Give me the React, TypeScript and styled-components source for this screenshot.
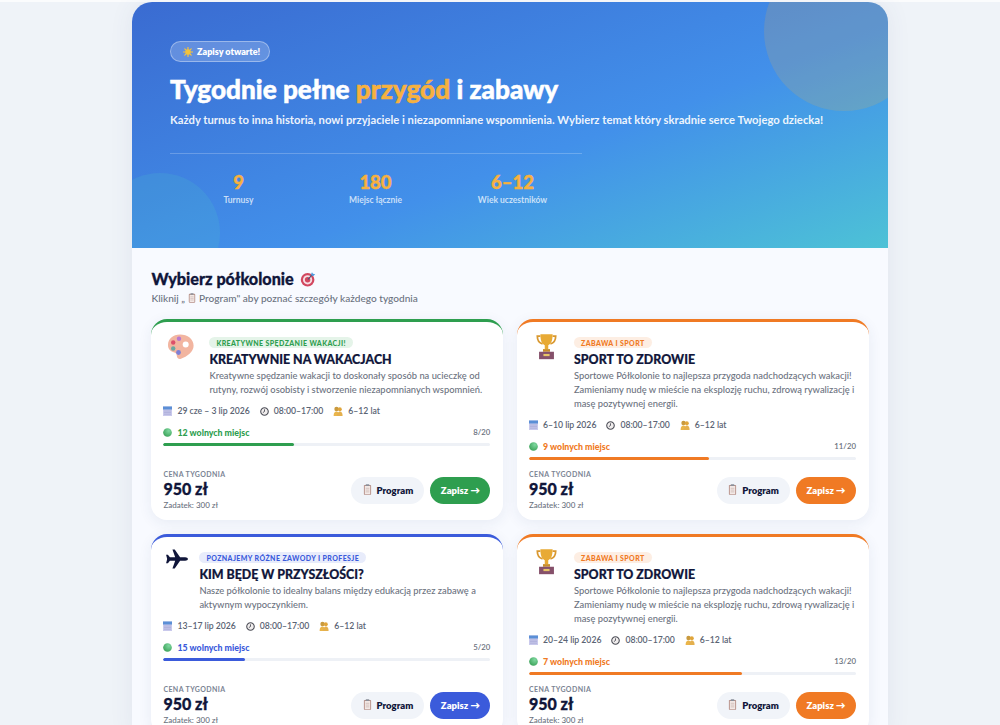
import React from "react";
import styled, { createGlobalStyle } from "styled-components";

const FONT = `"Lato", "Noto Sans", "Liberation Sans", sans-serif`;

const Global = createGlobalStyle`
  html, body { margin: 0; padding: 0; height: 725px; overflow: hidden; background: #eff3f8; }
  * { box-sizing: border-box; }
  body { font-family: ${FONT}; color: #10163a; }
`;

const TopStrip = styled.div`
  height: 2px;
  background: #fbfcfd;
`;
const Page = styled.main`
  width: 756px;
  margin-left: 132px;
  background: #f8faff;
  border-radius: 20px 20px 0 0;
  overflow: hidden;
  box-shadow: 0 0 24px rgba(60, 80, 130, 0.08);
`;
const Hero = styled.header`
  position: relative;
  height: 246px;
  padding: 39px 38px 0;
  overflow: hidden;
  background: linear-gradient(160deg, #3a6bd1 0%, #4290ea 58%, #4dc2d6 100%);
  color: #fff;
`;
const Blob = styled.div<{ $kind: "top" | "bottom" }>`
  position: absolute;
  border-radius: 50%;
  ${(p) =>
    p.$kind === "top"
      ? `width:160px;height:160px;top:-51px;right:-36px;background:rgba(245,176,65,.17);`
      : `width:120px;height:120px;top:171px;left:-32px;background:rgba(78,205,196,.16);`}
`;
const HeroContent = styled.div`
  position: relative;
`;
const OpenBadge = styled.div`
  display: flex;
  align-items: center;
  gap: 4px;
  width: 100px;
  height: 21px;
  padding-left: 12px;
  border-radius: 11px;
  background: rgba(255, 255, 255, 0.2);
  border: 1px solid rgba(255, 255, 255, 0.36);
  font-size: 9px;
  font-weight: 800;
`;
const HeroTitle = styled.h1`
  margin: 12px 0 0;
  height: 30px;
  font-size: 26.2px;
  line-height: 30px;
  font-weight: 900;
  -webkit-text-stroke: 0.5px currentColor;
  white-space: nowrap;
  em { font-style: normal; color: #f6b13f; }
`;
const HeroLead = styled.p`
  margin: 7px 0 0;
  font-size: 11.25px;
  line-height: 18px;
  font-weight: 700;
  color: rgba(255, 255, 255, 0.92);
  white-space: nowrap;
`;
const Stats = styled.div`
  display: grid;
  grid-template-columns: repeat(3, 137px);
  margin-top: 24px;
  padding-top: 18px;
  width: 412px;
  border-top: 1px solid rgba(255, 255, 255, 0.22);
  text-align: center;
`;
const StatValue = styled.div`
  font-size: 18.5px;
  line-height: 20px;
  font-weight: 900;
  -webkit-text-stroke: 0.4px currentColor;
  color: #f6b13f;
`;
const StatLabel = styled.div`
  margin-top: 1px;
  font-size: 8.5px;
  line-height: 14px;
  font-weight: 700;
  color: rgba(255, 255, 255, 0.72);
`;
const Section = styled.section`
  padding: 21px 19px 0 19.4px;
`;
const SectionTitle = styled.h2`
  display: flex;
  align-items: center;
  gap: 6px;
  margin: 0;
  height: 20px;
  font-size: 16.2px;
  line-height: 20px;
  font-weight: 900;
  -webkit-text-stroke: 0.3px currentColor;
  color: #10163a;
`;
const SectionHint = styled.p`
  display: flex;
  align-items: center;
  gap: 3px;
  margin: 1px 0 0;
  font-size: 10.1px;
  line-height: 16px;
  font-weight: 500;
  color: #6b7280;
`;
const Grid = styled.div`
  display: grid;
  grid-template-columns: 351.6px 351.6px;
  column-gap: 14px;
  row-gap: 14px;
  margin-top: 13px;
  align-items: stretch;
`;
const Card = styled.article<{ $c: string }>`
  display: flex;
  flex-direction: column;
  padding: 15px 12.6px 9px 12px;
  background: #fff;
  border-radius: 16px;
  border-top: 3px solid ${(p) => p.$c};
  box-shadow: 0 3px 14px rgba(40, 60, 120, 0.08);
`;
const CardHead = styled.div`
  display: flex;
  gap: 10px;
`;
const IconSlot = styled.div<{ $w: number }>`
  flex: none;
  width: ${(p) => p.$w}px;
  margin-top: -3px;
`;
const CardText = styled.div`
  flex: 1;
  min-width: 0;
`;
const Tag = styled.div<{ $c: string; $bg: string }>`
  display: flex;
  align-items: center;
  width: fit-content;
  height: 11px;
  padding: 0 7px;
  border-radius: 6px;
  background: ${(p) => p.$bg};
  color: ${(p) => p.$c};
  font-size: 7px;
  font-weight: 900;
  letter-spacing: 0.4px;
  text-transform: uppercase;
`;
const CardTitle = styled.h3`
  margin: 3px 0 0;
  font-size: 12.4px;
  line-height: 18px;
  font-weight: 900;
  -webkit-text-stroke: 0.2px currentColor;
  color: #10163a;
`;
const CardDesc = styled.p`
  margin: 0;
  font-size: 9.35px;
  line-height: 14px;
  font-weight: 500;
  color: #6b7280;
`;
const Meta = styled.div`
  display: flex;
  gap: 10px;
  margin-top: 7px;
  height: 14px;
  font-size: 8.7px;
  line-height: 14px;
  font-weight: 600;
  letter-spacing: -0.03px;
  color: #5b6474;
`;
const MetaItem = styled.span`
  display: inline-flex;
  align-items: center;
  gap: 5px;
  white-space: nowrap;
`;
const Avail = styled.div`
  display: flex;
  justify-content: space-between;
  align-items: center;
  margin-top: 7px;
  height: 14px;
`;
const AvailLabel = styled.span<{ $c: string }>`
  display: inline-flex;
  align-items: center;
  gap: 5px;
  font-size: 8.8px;
  font-weight: 900;
  color: ${(p) => p.$c};
`;
const AvailCount = styled.span`
  font-size: 7.8px;
  font-weight: 600;
  color: #6b7280;
`;
const Track = styled.div`
  height: 3.5px;
  margin-top: 3.5px;
  border-radius: 2px;
  background: #eef1f6;
  overflow: hidden;
`;
const Fill = styled.div<{ $c: string }>`
  height: 100%;
  border-radius: 2px;
  background: ${(p) => p.$c};
`;
const Footer = styled.div`
  display: flex;
  justify-content: space-between;
  align-items: center;
  margin-top: auto;
  padding-top: 9px;
`;
const PriceLabel = styled.div`
  font-size: 7px;
  line-height: 10px;
  font-weight: 700;
  letter-spacing: 0.4px;
  color: #7b8494;
`;
const Price = styled.div`
  font-size: 16px;
  line-height: 20px;
  font-weight: 900;
  -webkit-text-stroke: 0.3px currentColor;
  color: #10163a;
`;
const Deposit = styled.div`
  font-size: 8px;
  line-height: 12px;
  font-weight: 500;
  color: #6b7280;
`;
const Actions = styled.div`
  display: flex;
  gap: 6px;
`;
const ProgramBtn = styled.button`
  display: inline-flex;
  align-items: center;
  justify-content: center;
  gap: 5px;
  width: 73px;
  height: 27px;
  padding: 0;
  border: 0;
  border-radius: 14px;
  background: #f1f4f9;
  font-family: inherit;
  font-size: 9.5px;
  font-weight: 800;
  color: #10163a;
`;
const EnrollBtn = styled.button<{ $c: string }>`
  width: 60px;
  height: 27px;
  padding: 0;
  border: 0;
  border-radius: 14px;
  background: ${(p) => p.$c};
  font-family: inherit;
  font-size: 9.5px;
  font-weight: 800;
  color: #fff;
  white-space: nowrap;
`;

const Sun = () => (
  <svg width="10" height="10" viewBox="0 0 20 20">
    <g stroke="#f6c23c" strokeWidth="2.4" strokeLinecap="round">
      <path d="M10 1v18M1 10h18M3.6 3.6l12.8 12.8M16.4 3.6L3.6 16.4" />
    </g>
    <circle cx="10" cy="10" r="5.5" fill="#f4c23a" />
  </svg>
);
const Target = () => (
  <svg width="16" height="16" viewBox="0 0 20 20">
    <circle cx="9.5" cy="11" r="8.5" fill="#d2475f" />
    <circle cx="9.5" cy="11" r="5.8" fill="#f5dfe3" />
    <circle cx="9.5" cy="11" r="3.4" fill="#d2475f" />
    <path d="M10 10.5L16 4" stroke="#44597a" strokeWidth="1.4" />
    <path d="M15 1.500l1.200 2 2.800.5-2.200 2.300-2.300-.6-.5-2.200z" fill="#4c9be0" />
  </svg>
);
const Clip = ({ size = 9 }: { size?: number }) => (
  <svg width={size} height={size * 1.25} viewBox="0 0 10 12">
    <rect x="1" y="0.8" width="8" height="11" rx="1" fill="#b58e86" />
    <rect x="2" y="2" width="6" height="9" fill="#f3e9e6" />
    <rect x="3" y="0" width="4" height="2" rx=".6" fill="#8a8f99" />
    <path d="M3 4.500h4M3 6.500h4M3 8.500h4" stroke="#c9b4b0" strokeWidth=".8" />
  </svg>
);
const Calendar = () => (
  <svg width="9" height="10" viewBox="0 0 9 10">
    <rect x="0" y="0.5" width="9" height="9.5" fill="#c9c9ec" />
    <rect x="0" y="0.5" width="9" height="3" fill="#5b8fd6" />
    <path d="M1 5h7M1 6.600h7M1 8.200h7" stroke="#a5a6d4" strokeWidth=".7" />
  </svg>
);
const Clock = () => (
  <svg width="9" height="9" viewBox="0 0 10 10">
    <circle cx="5" cy="5" r="4.200" fill="#f0eded" stroke="#4d4f58" strokeWidth="1.200" />
    <path d="M5 2.600V5L3.200 6.200" stroke="#4d4f58" strokeWidth="1" fill="none" />
  </svg>
);
const Family = () => (
  <svg width="10" height="10" viewBox="0 0 10 10">
    <circle cx="3.500" cy="3" r="2.200" fill="#c99a3e" />
    <circle cx="6.800" cy="3.200" r="2" fill="#e0a53a" />
    <path d="M.6 10c0-3 1-4.500 2.800-4.500S6 7 6 10z" fill="#eab54a" />
    <path d="M4 10c0-3 1.400-4.500 3-4.500S9.600 7 9.600 10z" fill="#e4b04e" />
  </svg>
);
const Dot = () => (
  <svg width="9" height="9" viewBox="0 0 10 10">
    <defs>
      <radialGradient id="dotg" cx="65%" cy="30%" r="75%">
        <stop offset="0" stopColor="#7fd8a0" />
        <stop offset="1" stopColor="#3da35a" />
      </radialGradient>
    </defs>
    <circle cx="5" cy="5" r="4.800" fill="url(#dotg)" />
  </svg>
);
const Palette = () => (
  <svg width="28" height="26" viewBox="0 0 28 26" style={{ marginLeft: 4 }}>
    <path
      d="M13 .5C6 .5 1 5 1 11c0 4 2.400 6.400 5.600 7.200 2.400.6 3.200 1.600 3.200 3.600 0 2.400 2 3.800 4.200 3 6-2 12.600-7 12.600-13C26.600 5 20.600.5 13 .5z"
      fill="#f2b5a0"
    />
    <circle cx="18.700" cy="10.500" r="3" fill="#ffffff" />
    <circle cx="6.200" cy="8.500" r="2.200" fill="#dc4f6a" />
    <circle cx="12" cy="4.800" r="2.200" fill="#b878d0" />
    <circle cx="6.200" cy="14.500" r="2.200" fill="#69a8a0" />
    <circle cx="11.500" cy="18.500" r="2.400" fill="#7d7fd6" />
  </svg>
);
const Trophy = () => (
  <svg width="21" height="27" viewBox="0 0 24 30" style={{ marginLeft: 7, marginTop: -1 }}>
    <path d="M5 3H1.500c0 5 2 8 6 9M19 3h3.500c0 5-2 8-6 9" fill="none" stroke="#d9982f" strokeWidth="2" />
    <path d="M5 1h14c0 7-1.500 11-5 12.500V18h-4v-4.500C6.500 12 5 8 5 1z" fill="#e8aa35" />
    <path d="M8 18h8v3H8z" fill="#c98d2a" />
    <rect x="3.500" y="21" width="17" height="8.500" fill="#85506a" />
    <rect x="8.500" y="23.500" width="7" height="2.500" fill="#e8c468" />
  </svg>
);
const Plane = () => (
  <svg width="24" height="20" viewBox="0 0 26 22" style={{ marginLeft: 2 }}>
    <path
      d="M25 11c0-1-1.300-1.800-3-1.800h-5.600L10.500.5H8l3 8.700H5.200L3 6.400H1l1.200 4.600L1 15.600h2l2.200-2.800H11l-3 8.700h2.500l5.900-8.700H22c1.700 0 3-.8 3-1.800z"
      fill="#10163a"
    />
  </svg>
);

type Data = {
  icon: React.ReactNode; w: number; c: string; bg: string; tag: string; title: string; desc: string;
  date: string; free: number; taken: number;
};

const sportDesc =
  "Sportowe Półkolonie to najlepsza przygoda nadchodzących wakacji! Zamieniamy nudę w mieście na eksplozję ruchu, zdrową rywalizację i masę pozytywnej energii.";
const ORANGE = "#f07a24";
const ORANGE_BG = "#fdeee3";

const cards: Data[] = [
  { icon: <Palette />, w: 36, c: "#2e9e4f", bg: "#e5f4e9", tag: "Kreatywne spędzanie wakacji!", title: "KREATYWNIE NA WAKACJACH",
    desc: "Kreatywne spędzanie wakacji to doskonały sposób na ucieczkę od rutyny, rozwój osobisty i stworzenie niezapomnianych wspomnień.",
    date: "29 cze – 3 lip 2026", free: 12, taken: 8 },
  { icon: <Trophy />, w: 35, c: ORANGE, bg: ORANGE_BG, tag: "Zabawa i sport", title: "SPORT TO ZDROWIE", desc: sportDesc,
    date: "6–10 lip 2026", free: 9, taken: 11 },
  { icon: <Plane />, w: 26, c: "#3b5bdb", bg: "#e8ecfb", tag: "Poznajemy różne zawody i profesje", title: "KIM BĘDĘ W PRZYSZŁOŚCI?",
    desc: "Nasze półkolonie to idealny balans między edukacją przez zabawę a aktywnym wypoczynkiem.",
    date: "13–17 lip 2026", free: 15, taken: 5 },
  { icon: <Trophy />, w: 35, c: ORANGE, bg: ORANGE_BG, tag: "Zabawa i sport", title: "SPORT TO ZDROWIE", desc: sportDesc,
    date: "20–24 lip 2026", free: 7, taken: 13 },
];

export default function App() {
  return (
    <>
      <Global />
      <TopStrip />
      <Page>
        <Hero>
          <Blob $kind="top" />
          <Blob $kind="bottom" />
          <HeroContent>
            <OpenBadge><Sun /> Zapisy otwarte!</OpenBadge>
            <HeroTitle>Tygodnie pełne <em>przygód</em> i zabawy</HeroTitle>
            <HeroLead>Każdy turnus to inna historia, nowi przyjaciele i niezapomniane wspomnienia. Wybierz temat który skradnie serce Twojego dziecka!</HeroLead>
            <Stats>
              <div><StatValue>9</StatValue><StatLabel>Turnusy</StatLabel></div>
              <div><StatValue>180</StatValue><StatLabel>Miejsc łącznie</StatLabel></div>
              <div><StatValue>6–12</StatValue><StatLabel>Wiek uczestników</StatLabel></div>
            </Stats>
          </HeroContent>
        </Hero>
        <Section>
          <SectionTitle>Wybierz półkolonie <Target /></SectionTitle>
          <SectionHint>Kliknij „ <Clip size={8} /> Program" aby poznać szczegóły każdego tygodnia</SectionHint>
          <Grid>
            {cards.map((d, i) => (
              <Card key={i} $c={d.c}>
                <CardHead>
                  <IconSlot $w={d.w}>{d.icon}</IconSlot>
                  <CardText>
                    <Tag $c={d.c} $bg={d.bg}>{d.tag}</Tag>
                    <CardTitle>{d.title}</CardTitle>
                    <CardDesc>{d.desc}</CardDesc>
                  </CardText>
                </CardHead>
                <Meta>
                  <MetaItem><Calendar /> {d.date}</MetaItem>
                  <MetaItem><Clock /> 08:00–17:00</MetaItem>
                  <MetaItem><Family /> 6–12 lat</MetaItem>
                </Meta>
                <Avail>
                  <AvailLabel $c={d.c}><Dot /> {d.free} wolnych miejsc</AvailLabel>
                  <AvailCount>{d.taken}/20</AvailCount>
                </Avail>
                <Track><Fill $c={d.c} style={{ width: `${(d.taken / 20) * 100}%` }} /></Track>
                <Footer>
                  <div>
                    <PriceLabel>CENA TYGODNIA</PriceLabel>
                    <Price>950 zł</Price>
                    <Deposit>Zadatek: 300 zł</Deposit>
                  </div>
                  <Actions>
                    <ProgramBtn><Clip /> Program</ProgramBtn>
                    <EnrollBtn $c={d.c}>Zapisz →</EnrollBtn>
                  </Actions>
                </Footer>
              </Card>
            ))}
          </Grid>
        </Section>
      </Page>
    </>
  );
}
